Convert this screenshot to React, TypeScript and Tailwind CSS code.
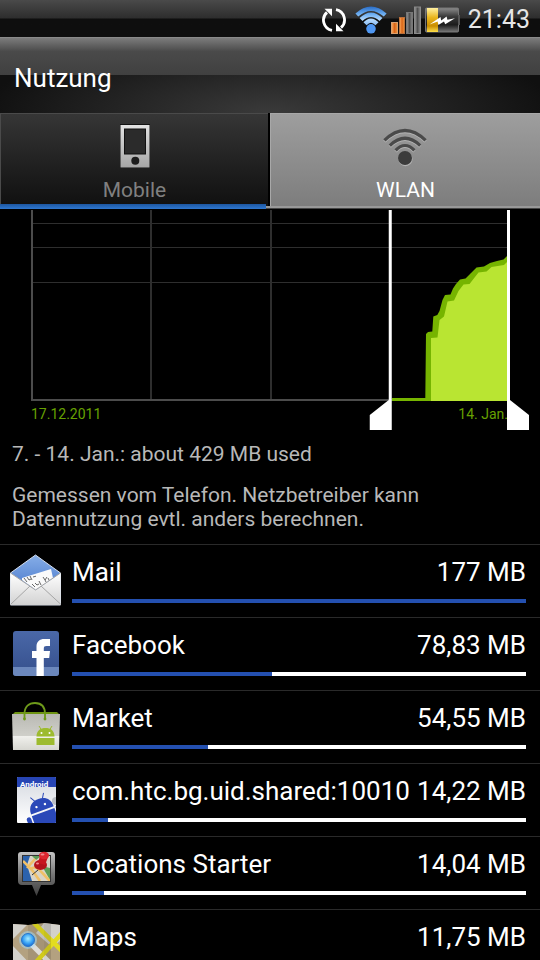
import { useState } from "react";
import type { ReactNode } from "react";

type Usage = {
  name: string;
  amount: string;
  share: number;
  icon: ReactNode;
};

function SyncIcon() {
  return (
    <svg width="26" height="26" viewBox="0 0 26 26" fill="none" aria-hidden>
      <path d="M11 23.4A10.400 10.400 0 0 1 6 5.400" stroke="#fff" strokeWidth="2.800" />
      <path d="M15 2.600A10.400 10.400 0 0 1 20 20.600" stroke="#fff" strokeWidth="2.800" />
      <path d="M3.500 1.800H11V9.300z" fill="#fff" />
      <path d="M22.500 24.200H15V16.700z" fill="#fff" />
    </svg>
  );
}

function StatusWifiIcon() {
  return (
    <svg width="32" height="28" viewBox="0 0 32 28" fill="none" aria-hidden>
      <defs>
        <linearGradient id="wifi" x1="0" y1="0" x2="0" y2="28" gradientUnits="userSpaceOnUse">
          <stop offset="0" stopColor="#2468c4" />
          <stop offset="0.3" stopColor="#6fb0f2" />
          <stop offset="0.5" stopColor="#b4d8fb" />
          <stop offset="1" stopColor="#3f8ff0" />
        </linearGradient>
      </defs>
      <g stroke="url(#wifi)" strokeWidth="4.200">
        <path d="M1.800 9Q16 -3.600 30.200 9" />
        <path d="M6 13.600Q16 3.800 26 13.600" />
        <path d="M10 17.800Q16 11.400 22 17.800" />
      </g>
      <circle cx="16" cy="22.800" r="4.800" fill="#4f97f2" />
    </svg>
  );
}

function SignalIcon() {
  return (
    <svg width="30" height="28" viewBox="0 0 30 28" aria-hidden>
      <defs>
        <linearGradient id="bar" x1="0" y1="0" x2="1" y2="0">
          <stop offset="0" stopColor="#9a9a9a" />
          <stop offset="0.5" stopColor="#505050" />
          <stop offset="1" stopColor="#8a8a8a" />
        </linearGradient>
        <linearGradient id="barOn" x1="0" y1="0" x2="1" y2="0">
          <stop offset="0" stopColor="#ffb060" />
          <stop offset="0.5" stopColor="#d8641a" />
          <stop offset="1" stopColor="#f0983c" />
        </linearGradient>
      </defs>
      <rect x="0.5" y="16.5" width="6" height="11" fill="url(#barOn)" stroke="#d9a070" />
      <rect x="8.5" y="11.5" width="5" height="16" fill="url(#barOn)" stroke="#b9703c" />
      <rect x="15.5" y="6.5" width="6" height="21" fill="url(#bar)" stroke="#777" />
      <rect x="23.5" y="1" width="6" height="26.5" fill="url(#bar)" stroke="#8a8a8a" />
    </svg>
  );
}

function BatteryIcon() {
  return (
    <svg width="35" height="26" viewBox="0 0 35 26" aria-hidden>
      <defs>
        <linearGradient id="cell" x1="0" y1="0" x2="0" y2="1">
          <stop offset="0" stopColor="#8c8c8c" />
          <stop offset="0.35" stopColor="#3a3a3a" />
          <stop offset="0.7" stopColor="#1c1c1c" />
          <stop offset="1" stopColor="#777" />
        </linearGradient>
        <linearGradient id="charge" x1="0" y1="0" x2="0" y2="1">
          <stop offset="0" stopColor="#fff0a0" />
          <stop offset="0.4" stopColor="#e9b51c" />
          <stop offset="0.75" stopColor="#c98d00" />
          <stop offset="1" stopColor="#ffe04a" />
        </linearGradient>
      </defs>
      <rect x="0.5" y="1" width="33" height="24" rx="1" fill="url(#cell)" stroke="#777" />
      <rect x="2" y="1" width="11" height="24" fill="url(#charge)" />
      <rect x="33" y="8" width="2" height="10" fill="#555" />
      <path d="M4.500 17.500 15.500 10l.7 3.500 5.400-4 .8 3.300 7.600-1.600-9.800 6-1.200-2.800-5.600 3.600-.8-3.600z" fill="#fff" />
    </svg>
  );
}

function PhoneIcon() {
  return (
    <svg width="30" height="44" viewBox="0 0 30 44" aria-hidden>
      <defs>
        <linearGradient id="phone" x1="0" y1="0" x2="0" y2="1">
          <stop offset="0" stopColor="#e2e2e2" />
          <stop offset="1" stopColor="#a6a6a6" />
        </linearGradient>
      </defs>
      <rect x="0" y="0" width="30" height="44" fill="#111" />
      <rect x="0.5" y="1" width="29" height="42.5" fill="url(#phone)" />
      <rect x="4.5" y="5" width="21" height="25" fill="#2b2b2b" stroke="#111" />
      <circle cx="15.3" cy="36.8" r="4" fill="#1d1d1d" />
    </svg>
  );
}

function WlanIcon() {
  return (
    <svg width="46" height="44" viewBox="0 0 46 44" fill="none" aria-hidden>
      <g stroke="#b4b4b4" strokeWidth="3.2" transform="translate(0 1)">
        <path d="M1.400 16.400Q22 -3.400 42.600 16.400" />
        <path d="M6.800 21.600Q22 7 37.200 21.600" />
        <path d="M12.600 26.400Q22 16.600 31.400 26.400" />
      </g>
      <circle cx="22.400" cy="35" r="7.200" fill="#b4b4b4" />
      <g stroke="#4a4a4a" strokeWidth="3.200">
        <path d="M1.400 16.400Q22 -3.400 42.600 16.400" />
        <path d="M6.800 21.600Q22 7 37.200 21.600" />
        <path d="M12.600 26.400Q22 16.600 31.400 26.400" />
      </g>
      <circle cx="22" cy="34" r="7" fill="#3c3c3c" />
    </svg>
  );
}

function MailIcon() {
  return (
    <svg width="52" height="52" viewBox="0 0 52 52" aria-hidden>
      <defs>
        <linearGradient id="flap" x1="0" y1="0" x2="0" y2="1">
          <stop offset="0" stopColor="#86aee8" />
          <stop offset="1" stopColor="#3465c0" />
        </linearGradient>
        <linearGradient id="paper" x1="0" y1="0" x2="0" y2="1">
          <stop offset="0" stopColor="#ffffff" />
          <stop offset="1" stopColor="#d2d2d2" />
        </linearGradient>
      </defs>
      <path d="M.5 19 25.500 1 50.500 19V51H.5z" fill="url(#flap)" stroke="#d7e0ee" />
      <path d="M.5 19 26 36 50.500 19V51H.5z" fill="url(#paper)" />
      <path d="M12 24 41 15l2 9-17 12-14-10z" fill="#fafafa" />
      <path
        d="m14 24 3 4m0-5 2 3 2-1m-1-3 2 4m1-3 3-.8M22 30l3 3m0-4 2 2 2-1m0-3 2 4m2-8 2 3 2-3m-2 3 1 2m2-4 1.500 3"
        stroke="#555"
        strokeWidth=".9"
        fill="none"
      />
      <path d="M.5 50.500 20 32m31 18.500L31 32M.5 19 25.500 36l25-17" stroke="#a5a5a5" fill="none" />
    </svg>
  );
}

function FacebookIcon() {
  return (
    <svg width="52" height="52" viewBox="0 0 52 52" aria-hidden>
      <defs>
        <linearGradient id="fb" x1="0" y1="0" x2="0" y2="1">
          <stop offset="0" stopColor="#4a68a8" />
          <stop offset="1" stopColor="#354f8c" />
        </linearGradient>
      </defs>
      <rect x="3" y="4" width="46" height="45" rx="3" fill="url(#fb)" />
      <path d="M3 40h46v6a3 3 0 0 1-3 3H6a3 3 0 0 1-3-3z" fill="#6b87bc" />
      <path
        d="M26.500 49V31H22v-7h4.500v-4.500c0-5 3.200-7.500 7.800-7.500H40v7h-3.500c-2 0-2.700.8-2.700 2.500V24H40l-.8 7h-5.400v18z"
        fill="#fff"
      />
    </svg>
  );
}

function MarketIcon() {
  return (
    <svg width="52" height="52" viewBox="0 0 52 52" aria-hidden>
      <defs>
        <linearGradient id="bag" x1="0" y1="0" x2="0" y2="1">
          <stop offset="0" stopColor="#b9b9b3" />
          <stop offset="0.6" stopColor="#cfcfc9" />
          <stop offset="0.62" stopColor="#f0f0ec" />
          <stop offset="1" stopColor="#d6d6d0" />
        </linearGradient>
      </defs>
      <path d="M5 12H47L50 15H2z" fill="#6e9413" />
      <path d="M2 14H50L49 50H3z" fill="url(#bag)" />
      <path d="M14.500 19V14C14.500 6.500 19 3 25 3S35 6.500 35 14v5" stroke="#6e9a1a" strokeWidth="1.800" fill="none" />
      <circle cx="14.500" cy="19" r="1.400" fill="#6e9a1a" />
      <circle cx="35" cy="19" r="1.400" fill="#6e9a1a" />
      <path d="M26.500 36.500c0-6 4-8.500 9-8.500s9 2.500 9 8.500zM26.500 38H44.500V45H26.500z" fill="#9dbb2f" />
      <path d="m29 26 2.500 4m10.500-4-2.500 4" stroke="#9dbb2f" />
      <circle cx="31.500" cy="33" r="1" fill="#fff" />
      <circle cx="39.500" cy="33" r="1" fill="#fff" />
    </svg>
  );
}

function AndroidIcon() {
  return (
    <svg width="52" height="52" viewBox="0 0 52 52" aria-hidden>
      <defs>
        <clipPath id="card">
          <rect x="7" y="4" width="39" height="46" rx="1" />
        </clipPath>
        <clipPath id="banner">
          <rect x="7" y="4" width="39" height="10" />
        </clipPath>
        <linearGradient id="sheet" x1="0" y1="0" x2="0" y2="1">
          <stop offset="0" stopColor="#d5d9e0" />
          <stop offset="1" stopColor="#ffffff" />
        </linearGradient>
      </defs>
      <g clipPath="url(#card)">
        <rect x="7" y="4" width="39" height="46" fill="url(#sheet)" />
        <rect x="7" y="4" width="39" height="10" fill="#2745b4" />
        <g clipPath="url(#banner)">
          <text x="10" y="14" fontSize="8" fontWeight="700" fill="#fff" fontFamily="Roboto, sans-serif">
            Android
          </text>
        </g>
        <circle cx="46" cy="28" r="4" fill="#b9bdc4" />
        <g transform="rotate(-20 33 36)" fill="#2a48b8">
          <path d="M20 37c0-8 5-12 12-12s12 4 12 12z" />
          <path d="M20 39H44V58H20z" />
          <rect x="14" y="39" width="4.500" height="15" rx="2.200" />
          <rect x="45.500" y="37" width="4.500" height="15" rx="2.200" />
          <path d="m25 21 3 5m11-5-3 5" stroke="#2a48b8" />
          <circle cx="27.500" cy="32" r="1.200" fill="#fff" />
          <circle cx="36.500" cy="32" r="1.200" fill="#fff" />
        </g>
      </g>
    </svg>
  );
}

function LocationsIcon() {
  return (
    <svg width="52" height="52" viewBox="0 0 52 52" aria-hidden>
      <defs>
        <linearGradient id="frame" x1="0" y1="0" x2="0" y2="1">
          <stop offset="0" stopColor="#c4c4c4" />
          <stop offset="0.5" stopColor="#777" />
          <stop offset="1" stopColor="#3c3c3c" />
        </linearGradient>
        <clipPath id="spot">
          <rect x="13" y="10" width="27" height="25" />
        </clipPath>
      </defs>
      <path d="M11 6H42a3 3 0 0 1 3 3V35a4 4 0 0 1-4 4H31L26.500 50 22 39H12a4 4 0 0 1-4-4V9a3 3 0 0 1 3-3z" fill="url(#frame)" />
      <g clipPath="url(#spot)">
        <rect x="13" y="10" width="27" height="25" fill="#d9d4c6" />
        <path d="M13 10h7l-3 9 5 16h-9z" fill="#2b62ad" />
        <path d="M32 20 40 34V22zM22 10h9l-5 4z" fill="#5d9d58" />
        <path d="M13 15 22 24l8 11M17 22l8-9M20 23c8-5 10 3 20 12" stroke="#f0c067" strokeWidth="2.600" fill="none" />
      </g>
      <rect x="12.500" y="9.500" width="28" height="26" fill="none" stroke="#333" />
      <path d="m28 24-6 5" stroke="#333" />
      <ellipse cx="30.500" cy="19" rx="6.500" ry="5" fill="#b3131b" />
      <path d="m30 10 8 1-3 8-7-2z" fill="#c8161f" />
      <ellipse cx="34" cy="9.500" rx="5" ry="3.800" fill="#dd2730" />
      <ellipse cx="32.500" cy="8.500" rx="2" ry="1" fill="#f18a8e" />
      <ellipse cx="27.500" cy="17.500" rx="1.500" ry="1" fill="#f18a8e" />
    </svg>
  );
}

function MapsIcon() {
  return (
    <svg width="52" height="52" viewBox="0 0 52 52" aria-hidden>
      <defs>
        <clipPath id="map">
          <path d="M3 5 18 6 34 4 50 6V52H3z" />
        </clipPath>
        <radialGradient id="orb" cx="0.5" cy="0.4" r="0.6">
          <stop offset="0" stopColor="#a8ecff" />
          <stop offset="0.6" stopColor="#3ba4f5" />
          <stop offset="1" stopColor="#1967cf" />
        </radialGradient>
      </defs>
      <g clipPath="url(#map)">
        <rect x="3" y="4" width="47" height="48" fill="#b3a180" />
        <path d="M3 4h16L3 20zM3 27l24 25H3zM34 4h16v18l-8 6L26 14z" fill="#d3d1cb" />
        <path d="M18 22 46 50" stroke="#f1efea" strokeWidth="5" />
        <path d="M22 2 54 34M54 12 18 52" stroke="#e3dc20" strokeWidth="4.500" />
        <path d="M18 4h16v48H18z" fill="#000" opacity=".08" />
        <path d="M34 4h7v48h-7z" fill="#000" opacity=".12" />
      </g>
      <circle cx="18" cy="21" r="9" fill="#9fdcff" opacity=".5" />
      <circle cx="18" cy="21" r="6.500" fill="url(#orb)" stroke="#2a76c9" />
    </svg>
  );
}

const apps: Usage[] = [
  { name: "Mail", amount: "177 MB", share: 100, icon: <MailIcon /> },
  { name: "Facebook", amount: "78,83 MB", share: 44, icon: <FacebookIcon /> },
  { name: "Market", amount: "54,55 MB", share: 30, icon: <MarketIcon /> },
  { name: "com.htc.bg.uid.shared:10010", amount: "14,22 MB", share: 8, icon: <AndroidIcon /> },
  { name: "Locations Starter", amount: "14,04 MB", share: 7, icon: <LocationsIcon /> },
  { name: "Maps", amount: "11,75 MB", share: 6, icon: <MapsIcon /> },
];

const DAYS = 28;
const dayToX = (day: number) => 32 + (day / DAYS) * 477;

function StatusBar() {
  return (
    <div className="flex h-[37px] shrink-0 items-center justify-end gap-2 bg-linear-to-b from-[#4a4a4a] from-0% via-[#2e2e2e] via-48% to-[#0e0e0e] to-52% pt-0.5 pr-2.5">
      <SyncIcon />
      <StatusWifiIcon />
      <div className="-ml-1 flex items-center gap-1">
        <SignalIcon />
        <BatteryIcon />
      </div>
      <span className="text-[25px] leading-none text-[#e6e6e6]">21:43</span>
    </div>
  );
}

function UsageChart() {
  const [start, setStart] = useState(21);
  const [end, setEnd] = useState(DAYS);
  const left = dayToX(start);
  const right = dayToX(end);

  return (
    <div className="relative">
      <svg viewBox="0 0 540 220" className="block w-full" role="img" aria-label="Datennutzung">
        <g fill="#2e2e2e">
          <rect x="32" y="13" width="477" height="1" />
          <rect x="32" y="37" width="477" height="1" />
          <rect x="32" y="72" width="477" height="1" />
          <rect x="150" y="0" width="2" height="190" />
          <rect x="270" y="0" width="2" height="190" />
        </g>
        <path d="M32 0V190H509" stroke="#4c4c4c" strokeWidth="2" fill="none" />
        <path
          d="M392 188H425.300L426 124 428 122 432.300 121.500 433.300 106.500 437.300 105 439.500 101 442.500 90 445 85 450.500 84.500 453 78.500 456 74 460 69.500 465.500 68.500 471 63 476.500 57.500 484 56.500 490 53 497 51 503.500 49.500 508 45V191H392z"
          fill="#76b400"
        />
        <path
          d="M431 191V128L437.500 127.500 439.500 110 444 106.500 447.500 91.500 454 90.500 458.500 81 463.500 74.500 469.500 74 478.500 62.500 486.500 61.500 491.500 57 504 55 508 51V191z"
          fill="#b9e532"
        />
        <g fill="#67a100" fontSize="14" fontFamily="Roboto, sans-serif">
          <text x="31" y="209">17.12.2011</text>
          <text x="508" y="209" textAnchor="end">14. Jan.</text>
        </g>
        <g fill="#fff">
          <path d={`M${left - 1} 0h3V220h-22v-15l19-15z`} />
          <path d={`M${right + 1} 0h-3V220h22v-15l-19-15z`} />
        </g>
      </svg>
      <input
        type="range"
        aria-label="Beginn des Zeitraums"
        min={0}
        max={DAYS}
        value={start}
        onChange={(e) => setStart(Math.min(Number(e.target.value), end - 1))}
        className="absolute bottom-0 left-0 h-8 w-3/4 opacity-0"
      />
      <input
        type="range"
        aria-label="Ende des Zeitraums"
        min={0}
        max={DAYS}
        value={end}
        onChange={(e) => setEnd(Math.max(Number(e.target.value), start + 1))}
        className="absolute right-0 bottom-0 h-8 w-1/4 opacity-0"
      />
    </div>
  );
}

function UsageRow({ app }: { app: Usage }) {
  return (
    <li className="flex h-[73px] items-start gap-2.5 border-t border-[#2a2a2a] pt-[9px] pr-3.5 pl-2.5">
      <span className="shrink-0">{app.icon}</span>
      <div className="min-w-0 flex-1">
        <div className="flex h-[45px] text-[26px] leading-9 whitespace-nowrap">
          <span className="min-w-0 flex-1 overflow-hidden">{app.name}</span>
          <span>{app.amount}</span>
        </div>
        <div className="h-1 bg-white" role="progressbar" aria-label={app.name} aria-valuenow={app.share}>
          <div className="h-full bg-[#2450b0]" style={{ width: `${app.share}%` }} />
        </div>
      </div>
    </li>
  );
}

export default function App() {
  const [tab, setTab] = useState("wlan");

  return (
    <div className="flex h-screen flex-col overflow-hidden bg-black font-['Roboto',sans-serif] text-white">
      <StatusBar />
      <header className="flex h-19 shrink-0 items-center border-t border-[#8a8a8a] bg-[linear-gradient(#7c7c7c,#4a4a4a_18%,#404040_50%,transparent_50%),radial-gradient(ellipse_at_bottom,#3a3a3a,#101010_75%)] px-3.5 pt-1">
        <h1 className="text-[26px] leading-8">Nutzung</h1>
      </header>
      <div className="relative grid h-[97px] shrink-0 grid-cols-2 border-b border-black text-[21px] leading-6" role="tablist">
        <button
          role="tab"
          aria-selected={tab === "mobile"}
          onClick={() => setTab("mobile")}
          className="mr-0.5 flex flex-col items-center gap-2.5 border-t border-l border-[#4a4a4a] bg-linear-to-b from-[#363636] to-[#0f0f0f] pt-2.5 text-[#808080]"
        >
          <PhoneIcon />
          Mobile
        </button>
        <button
          role="tab"
          aria-selected={tab === "wlan"}
          onClick={() => setTab("wlan")}
          className="flex flex-col items-center gap-2.5 border-t border-l border-[#a8a8a8] bg-linear-to-b from-[#9e9e9e] to-[#7c7c7c] pt-2.5 text-white"
        >
          <WlanIcon />
          WLAN
        </button>
        <div className="absolute inset-x-0 bottom-0 flex items-end">
          <div className="h-[5px] w-[266px] bg-linear-to-b from-[#1d56a0] to-[#2f78d0]" />
          <div className="h-[3px] flex-1 border-b border-[#444] bg-[#999]" />
        </div>
      </div>
      <UsageChart />
      <div className="shrink-0 px-3 pt-3 pb-[13px] text-[21px] leading-6 text-[#b8b8b8]">
        <p>7. - 14. Jan.: about 429 MB used</p>
        <p className="max-w-[440px] pt-[17px]">
          Gemessen vom Telefon. Netzbetreiber kann Datennutzung evtl. anders berechnen.
        </p>
      </div>
      <ul className="min-h-0 flex-1 overflow-hidden">
        {apps.map((app) => (
          <UsageRow key={app.name} app={app} />
        ))}
      </ul>
    </div>
  );
}
